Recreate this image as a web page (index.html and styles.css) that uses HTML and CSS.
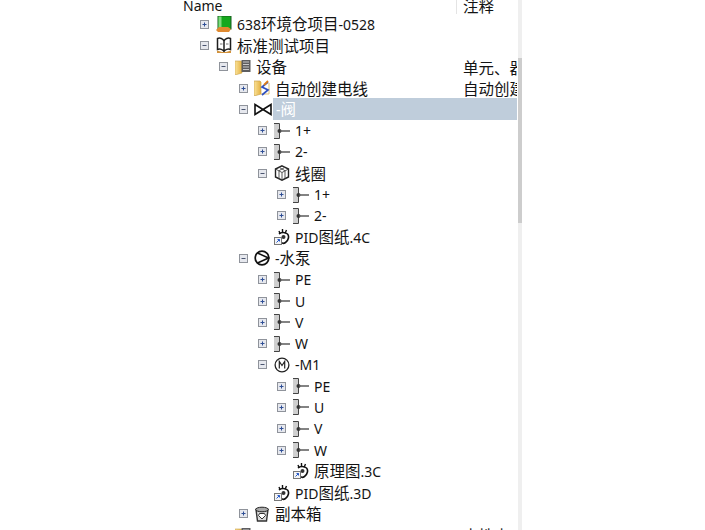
FILE: index.html
```html
<!DOCTYPE html>
<html lang="en">
<head>
    <meta charset="UTF-8">
    <title>Project tree</title>
    <link rel="stylesheet" href="styles.css">
</head>
<body>
    <svg class="defs" width="0" height="0">
        <defs>
            <linearGradient id="folderFill" x1="0" y1="0" x2="1" y2="0">
                <stop offset="0" stop-color="#fbe39a"/>
                <stop offset="1" stop-color="#e3b040"/>
            </linearGradient>
            <symbol id="plus" viewBox="0 0 9 9">
                <rect x=".5" y=".5" width="8" height="8" fill="#e6e8ee" stroke="#8f939b"/>
                <path d="M2.500 4.500h4M4.500 2.500v4" stroke="#2f4f96" fill="none"/>
            </symbol>
            <symbol id="minus" viewBox="0 0 9 9">
                <rect x=".5" y=".5" width="8" height="8" fill="#e6e8ee" stroke="#8f939b"/>
                <path d="M2.500 4.500h4" stroke="#4a5570" fill="none"/>
            </symbol>
            <symbol id="project" viewBox="0 0 16 16">
                <rect x="2" y="0" width="13" height="13" fill="#14a81e" stroke="#145a1c"/>
                <rect x="2.500" y=".5" width="3" height="12" fill="#7fdc7f"/>
                <path d="M0 14l3-3h9l3 2-2 3H2z" fill="#e08a30"/>
            </symbol>
            <symbol id="book" viewBox="0 0 16 16">
                <path d="M8 4C7 1.500 4 .5 1.500 1.500v11c2.500-1 5.500 0 6.500 2 1-2 4-3 6.500-2v-11C12 .5 9 1.500 8 4zM8 4v10" fill="#fff" stroke="#1e1e1e" stroke-width="1.500"/>
                <path d="M4 7h2.500M10 7h2.500" stroke="#777"/>
                <path d="M1 13.500l5 1.500h4l5-1.500V16H1z" fill="#d2923c"/>
            </symbol>
            <symbol id="folder" viewBox="0 0 16 16">
                <path d="M0 2h6l1 1v11l-7 2z" fill="url(#folderFill)" stroke="#c9a24a" stroke-width=".6"/>
                <rect x="6.500" y="1" width="9" height="12" fill="#5e5e60"/>
                <path d="M8 3h6M8 5.500h6M8 8h6M8 10.500h6" stroke="#c8c8c8"/>
            </symbol>
            <symbol id="autowire" viewBox="0 0 16 16">
                <path d="M0 1h6l1 1v12l-7 2z" fill="url(#folderFill)" stroke="#c9a24a" stroke-width=".7"/>
                <path d="M7 14h8V3" fill="none" stroke="#e0c070"/>
                <path d="M14 2L8 7l6 3-6 5" fill="none" stroke="#2f50c0" stroke-width="1.700"/>
                <path d="M14 1l-4 4" stroke="#e07e18" stroke-width="1.800"/>
            </symbol>
            <symbol id="valve" viewBox="0 0 18 13">
                <path d="M1 1.500v10l16-10v10z" fill="#fff" stroke="#111" stroke-width="1.600"/>
            </symbol>
            <symbol id="pin" viewBox="0 0 16 16">
                <rect x="0" y="0" width="5" height="16" fill="#cfcfcf"/>
                <path d="M0 .5h5.500v15H0" fill="none" stroke="#444"/>
                <circle cx="5.500" cy="8" r="2" fill="#333"/>
                <path d="M6 8h10" stroke="#5a5a5a" stroke-width="1.500"/>
            </symbol>
            <symbol id="coil" viewBox="0 0 16 16">
                <path d="M8 .8l6.500 3.200v8L8 15.200 1.500 12V4z" fill="#fff" stroke="#222" stroke-width="1.400"/>
                <path d="M1.500 4L8 7.500 14.500 4M8 7.500v7.700M5 2.300l6 3.400v8M11 2.300L5 5.700v8" fill="none" stroke="#444" stroke-width=".9"/>
            </symbol>
            <symbol id="sheet" viewBox="0 0 16 16">
                <path d="M5 5c2-2 6-2 8.500 0 2 2 1 6.500-2 8.500-1 .7-3 1-4 0" fill="#fff" stroke="#111" stroke-width="1.600"/>
                <path d="M5 2l1.200 3M8.500 0v4M12.500 1L11 4.500" stroke="#111" stroke-width="1.400"/>
                <circle cx="9.500" cy="8" r="2" fill="#333"/>
                <rect x=".5" y="8.500" width="7" height="7" fill="#f4f4f4" stroke="#777"/>
                <path d="M2.500 13.500l3-3M3.500 10.500h2v2" fill="none" stroke="#2458c8"/>
            </symbol>
            <symbol id="pump" viewBox="0 0 16 16">
                <circle cx="8" cy="8" r="6.800" fill="#fff" stroke="#111" stroke-width="1.700"/>
                <path d="M3.500 3L14.500 8 3.500 13" fill="none" stroke="#111" stroke-width="1.500"/>
            </symbol>
            <symbol id="motor" viewBox="0 0 16 16">
                <circle cx="8" cy="8" r="6.900" fill="#fff" stroke="#222" stroke-width="1.300"/>
                <path d="M5.300 11.500v-7L8 8.500l2.700-4v7" fill="none" stroke="#222" stroke-width="1.200"/>
            </symbol>
            <symbol id="bin" viewBox="0 0 16 16">
                <path d="M2 3.500h12l-1.500 11.500h-9z" fill="#d8d8d8" stroke="#333" stroke-width="1.400"/>
                <ellipse cx="8" cy="3.500" rx="6.300" ry="2.300" fill="#aaa" stroke="#222"/>
                <path d="M5.500 7.500h5l1 2-3.500 3.500-3.500-3.500z" fill="#fff" stroke="#333"/>
            </symbol>
        </defs>
    </svg>

    <div class="panel">
        <div class="tree">
            <div class="head">
                <span class="head-name lat">Name</span>
                <span class="head-note">注释</span>
            </div>

            <div class="row lv1"><svg class="tog"><use href="#plus"/></svg><svg class="ico"><use href="#project"/></svg><span class="name"><span class="lat">638</span>环境仓项目<span class="lat">-0528</span></span></div>
            <div class="row lv1"><svg class="tog"><use href="#minus"/></svg><svg class="ico"><use href="#book"/></svg><span class="name">标准测试项目</span></div>
            <div class="row lv2"><svg class="tog"><use href="#minus"/></svg><svg class="ico"><use href="#folder"/></svg><span class="name">设备</span><span class="note">单元、器件</span></div>
            <div class="row lv3"><svg class="tog"><use href="#plus"/></svg><svg class="ico"><use href="#autowire"/></svg><span class="name">自动创建电线</span><span class="note">自动创建电线</span></div>
            <div class="row lv3"><svg class="tog"><use href="#minus"/></svg><svg class="ico valve"><use href="#valve"/></svg><span class="name sel"><span class="lat">-</span>阀</span></div>
            <div class="row lv4"><svg class="tog"><use href="#plus"/></svg><svg class="ico"><use href="#pin"/></svg><span class="name lat">1+</span></div>
            <div class="row lv4"><svg class="tog"><use href="#plus"/></svg><svg class="ico"><use href="#pin"/></svg><span class="name lat">2-</span></div>
            <div class="row lv4"><svg class="tog"><use href="#minus"/></svg><svg class="ico"><use href="#coil"/></svg><span class="name">线圈</span></div>
            <div class="row lv5"><svg class="tog"><use href="#plus"/></svg><svg class="ico"><use href="#pin"/></svg><span class="name lat">1+</span></div>
            <div class="row lv5"><svg class="tog"><use href="#plus"/></svg><svg class="ico"><use href="#pin"/></svg><span class="name lat">2-</span></div>
            <div class="row lv4"><span class="tog"></span><svg class="ico"><use href="#sheet"/></svg><span class="name"><span class="lat">PID</span>图纸<span class="lat">.4C</span></span></div>
            <div class="row lv3"><svg class="tog"><use href="#minus"/></svg><svg class="ico"><use href="#pump"/></svg><span class="name"><span class="lat">-</span>水泵</span></div>
            <div class="row lv4"><svg class="tog"><use href="#plus"/></svg><svg class="ico"><use href="#pin"/></svg><span class="name lat">PE</span></div>
            <div class="row lv4"><svg class="tog"><use href="#plus"/></svg><svg class="ico"><use href="#pin"/></svg><span class="name lat">U</span></div>
            <div class="row lv4"><svg class="tog"><use href="#plus"/></svg><svg class="ico"><use href="#pin"/></svg><span class="name lat">V</span></div>
            <div class="row lv4"><svg class="tog"><use href="#plus"/></svg><svg class="ico"><use href="#pin"/></svg><span class="name lat">W</span></div>
            <div class="row lv4"><svg class="tog"><use href="#minus"/></svg><svg class="ico"><use href="#motor"/></svg><span class="name lat">-M1</span></div>
            <div class="row lv5"><svg class="tog"><use href="#plus"/></svg><svg class="ico"><use href="#pin"/></svg><span class="name lat">PE</span></div>
            <div class="row lv5"><svg class="tog"><use href="#plus"/></svg><svg class="ico"><use href="#pin"/></svg><span class="name lat">U</span></div>
            <div class="row lv5"><svg class="tog"><use href="#plus"/></svg><svg class="ico"><use href="#pin"/></svg><span class="name lat">V</span></div>
            <div class="row lv5"><svg class="tog"><use href="#plus"/></svg><svg class="ico"><use href="#pin"/></svg><span class="name lat">W</span></div>
            <div class="row lv5"><span class="tog"></span><svg class="ico"><use href="#sheet"/></svg><span class="name">原理图<span class="lat">.3C</span></span></div>
            <div class="row lv4"><span class="tog"></span><svg class="ico"><use href="#sheet"/></svg><span class="name"><span class="lat">PID</span>图纸<span class="lat">.3D</span></span></div>
            <div class="row lv3"><svg class="tog"><use href="#plus"/></svg><svg class="ico"><use href="#bin"/></svg><span class="name">副本箱</span></div>
            <div class="row lv2"><span class="tog"></span><svg class="ico"><use href="#folder"/></svg><span class="name"></span><span class="note">中性点</span></div>
        </div>
        <div class="scrollbar"><div class="thumb"></div></div>
    </div>
</body>
</html>
```

FILE: styles.css
```css
:root {
    --text-color: #141414;
    --selected: #bfcddb;
    --track: #efefef;
    --thumb: #cdcdcd;
}

html, body {
    margin: 0;
    height: 100%;
    overflow: hidden;
    background-color: #fff;
}

body {
    font-family: "Noto Sans CJK SC", "Noto Sans", sans-serif;
    font-size: 15.500px;
    color: var(--text-color);
}

.lat {
    font-family: "Noto Sans", sans-serif;
    font-size: 14px;
}

.defs {
    display: block;
    height: 0;
}

.panel {
    display: flex;
    width: 522px;
    height: 530px;
}

.tree {
    width: 517px;
    margin-right: 1px;
    overflow: hidden;
    flex-shrink: 0;
}

.head {
    display: flex;
    height: 13.500px;
    line-height: 11px;
    overflow: hidden;
}

.head-name {
    width: 273px;
    padding-left: 183px;
}

.head-note {
    padding-left: 6px;
    border-left: 1px solid #e4e4e4;
}

.row {
    display: flex;
    align-items: center;
    height: 21.300px;
    white-space: nowrap;
    position: relative;
}

.lv1 { padding-left: 200px; }
.lv2 { padding-left: 219px; }
.lv3 { padding-left: 239px; }
.lv4 { padding-left: 258px; }
.lv5 { padding-left: 277px; }

.tog {
    width: 9px;
    height: 9px;
    flex-shrink: 0;
}

.ico {
    width: 16px;
    height: 16px;
    margin-left: 7px;
    flex-shrink: 0;
}

.lv3 .ico {
    margin-left: 6px;
}

.valve {
    width: 18px;
    height: 13px;
}

.name {
    padding-left: 5px;
    line-height: 21px;
}

.sel {
    flex: 1;
    height: 22px;
    margin-left: 1px;
    padding-left: 3px;
    color: #fff;
    background-color: var(--selected);
}

.note {
    position: absolute;
    left: 463px;
    width: 54px;
    overflow: hidden;
}

.scrollbar {
    width: 4px;
    height: 530px;
    background-color: var(--track);
}

.thumb {
    height: 165px;
    margin-top: 58px;
    background-color: var(--thumb);
}
```
